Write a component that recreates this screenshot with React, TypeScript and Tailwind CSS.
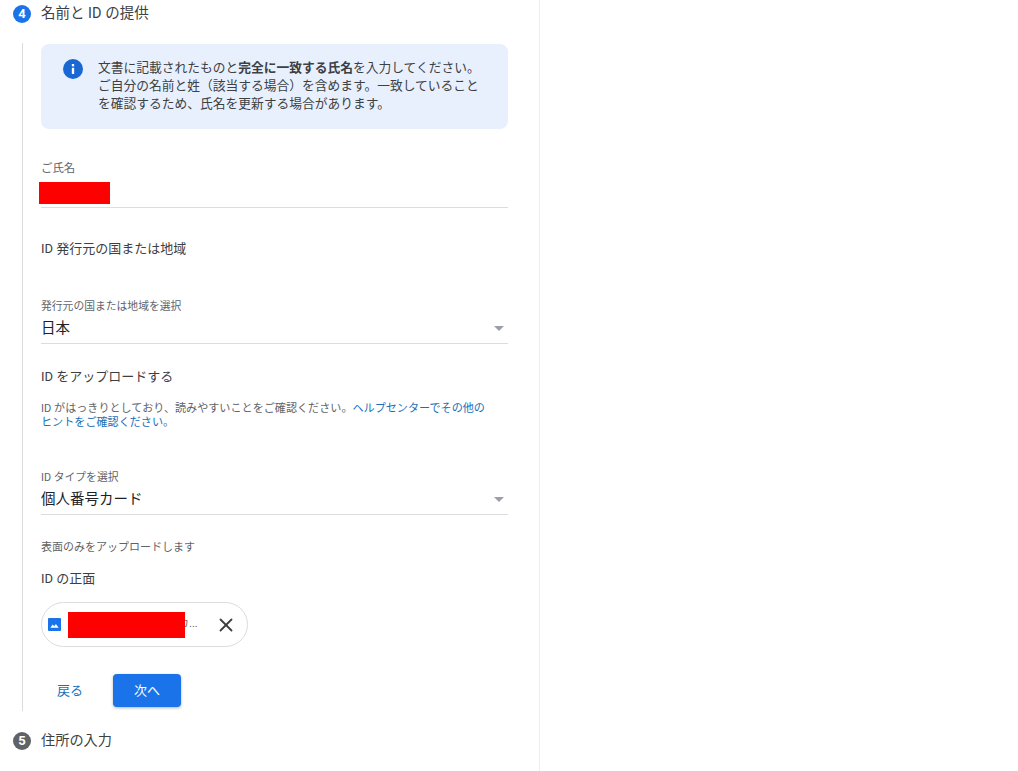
import { X } from 'lucide-react';

const font = { fontFamily: '"Roboto", "Noto Sans CJK JP", sans-serif' };

/* Numbered circle used by the stepper headings */
const StepBadge = ({ n, active }: { n: number; active?: boolean }) => (
  <span
    className={`flex h-[18px] w-[18px] shrink-0 items-center justify-center rounded-full text-[13px] font-bold text-white ${
      active ? 'bg-[#1a73e8]' : 'bg-[#5f6368]'
    }`}
  >
    {n}
  </span>
);

const SelectField = ({ label, value }: { label: string; value: string }) => (
  <div className="h-[47px] border-b border-[#dadce0]">
    <div className="h-[19px] text-[10.8px] leading-[19px] text-[#5f6368]">{label}</div>
    <div className="flex h-[25px] items-center justify-between">
      <span className="text-[14.5px] text-[#202124]">{value}</span>
      <span className="mr-[4px] h-0 w-0 border-x-[5px] border-t-[5px] border-x-transparent border-t-[#9aa0a6]" />
    </div>
  </div>
);

export default function App() {
  return (
    <div className="h-[771px] w-[1018px] overflow-hidden bg-white" style={font}>
      <div className="h-full w-[540px] border-r border-[#eeeeee] pl-[13px]">
        {/* Step 4 */}
        <div className="flex h-[27px] items-center gap-[10px]">
          <StepBadge n={4} active />
          <span className="text-[14.5px] text-[#3c4043]">名前と ID の提供</span>
        </div>

        <div className="ml-[9px] mt-[16px] h-[668px] w-[486px] border-l border-[#dadce0] pl-[18px] pt-px">
          {/* Info banner */}
          <div className="flex h-[85px] w-[467px] rounded-lg bg-[#e8f0fe] pl-[22px] pt-[15px]">
            <svg viewBox="0 0 24 24" className="h-[20px] w-[20px] shrink-0 fill-[#1967d2]">
              <circle cx="12" cy="12" r="12" />
              <rect x="10.6" y="10.5" width="2.8" height="7.5" fill="#fff" />
              <rect x="10.6" y="6" width="2.8" height="2.8" fill="#fff" />
            </svg>
            <p className="ml-[15px] w-[392px] text-[12.75px] leading-[18px] text-[#3c4043]">
              文書に記載されたものと<b className="font-bold">完全に一致する氏名</b>を入力してください。ご自分の名前と姓（該当する場合）を含めます。一致していることを確認するため、氏名を更新する場合があります。
            </p>
          </div>

          {/* Name */}
          <div className="mt-[30px] h-[19px] text-[11.4px] leading-[19px] text-[#5f6368]">ご氏名</div>
          <div className="h-[30px] w-[467px] border-b border-[#dadce0] pt-[4px]">
            <div className="ml-[-2px] h-[22px] w-[71px] bg-[#ff0000]" />
          </div>

          <h3 className="mt-[31px] text-[13px] leading-[20px] text-[#3c4043]">ID 発行元の国または地域</h3>

          <div className="mt-[38px] w-[467px]">
            <SelectField label="発行元の国または地域を選択" value="日本" />
          </div>

          <h3 className="mt-[23px] text-[13px] leading-[20px] text-[#3c4043]">ID をアップロードする</h3>
          <p className="mt-[15px] w-[450px] text-[11.1px] leading-[14px] text-[#5f6368]">
            ID がはっきりとしており、読みやすいことをご確認ください。<span className="text-[#1a6fb8]">ヘルプセンターでその他のヒントをご確認ください。</span>
          </p>

          <div className="mt-[38px] w-[467px]">
            <SelectField label="ID タイプを選択" value="個人番号カード" />
          </div>

          <p className="mt-[24px] text-[11px] leading-[18px] text-[#5f6368]">表面のみをアップロードします</p>
          <h3 className="mt-[13px] text-[13px] leading-[18px] text-[#3c4043]">ID の正面</h3>

          {/* Uploaded file chip */}
          <div className="mt-[14px] flex h-[45px] w-[207px] items-center rounded-full border border-[#dadce0] pl-[6px]">
            <svg viewBox="0 0 14 14" className="h-[13px] w-[13px] shrink-0">
              <rect width="14" height="14" rx="1" fill="#1a73e8" />
              <path d="M2.5 10.5 5 7l1.7 2L8.5 6.5l3 4z" fill="#fff" />
            </svg>
            <div className="relative ml-[7px] h-[26px] w-[130px]">
              <span className="absolute left-[110px] top-[4px] text-[11px] text-[#5f6368]">カ...</span>
              <div className="relative h-[26px] w-[117px] bg-[#ff0000]" />
            </div>
            <X className="ml-[17px] h-[22px] w-[22px] text-[#3c4043]" strokeWidth={2} />
          </div>

          {/* Actions */}
          <div className="mt-[27px] flex items-center">
            <button type="button" className="ml-[16px] text-[13px] text-[#1a6fb8]">戻る</button>
            <button
              type="button"
              className="ml-[30px] h-[33px] w-[68px] rounded bg-[#1a73e8] text-[13px] text-white shadow-[0_1px_3px_rgba(60,64,67,0.4)]"
            >
              次へ
            </button>
          </div>
        </div>

        {/* Step 5 */}
        <div className="mt-[16px] flex h-[27px] items-center gap-[10px]">
          <StepBadge n={5} />
          <span className="text-[14.2px] text-[#3c4043]">住所の入力</span>
        </div>
      </div>
    </div>
  );
}
